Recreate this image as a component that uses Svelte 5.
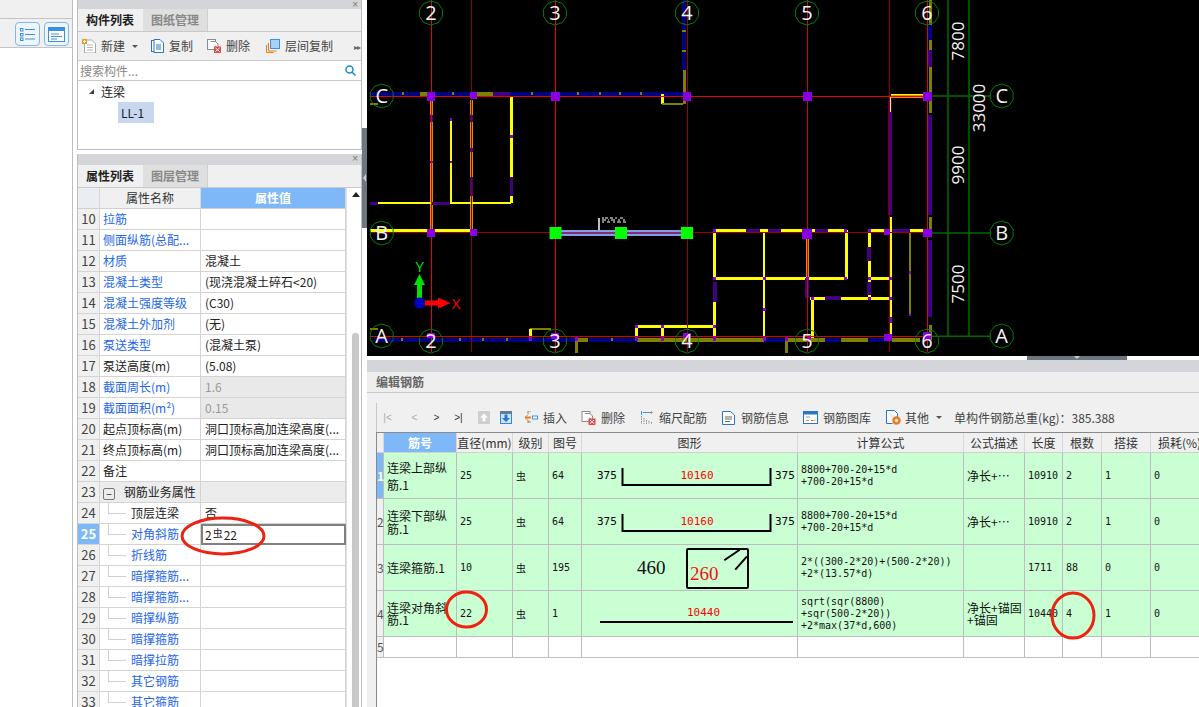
<script lang="ts">
  // Property grid rows: [no, name, value, blue?, flags]
  type Prop = { no: number; name: string; value?: string; blue?: boolean; ro?: boolean; child?: boolean; group?: boolean; sel?: boolean };
  const props: Prop[] = [
    { no: 10, name: '拉筋', blue: true },
    { no: 11, name: '侧面纵筋(总配...', blue: true },
    { no: 12, name: '材质', value: '混凝土', blue: true },
    { no: 13, name: '混凝土类型', value: '(现浇混凝土碎石<20)', blue: true },
    { no: 14, name: '混凝土强度等级', value: '(C30)', blue: true },
    { no: 15, name: '混凝土外加剂', value: '(无)', blue: true },
    { no: 16, name: '泵送类型', value: '(混凝土泵)', blue: true },
    { no: 17, name: '泵送高度(m)', value: '(5.08)' },
    { no: 18, name: '截面周长(m)', value: '1.6', blue: true, ro: true },
    { no: 19, name: '截面面积(m²)', value: '0.15', blue: true, ro: true },
    { no: 20, name: '起点顶标高(m)', value: '洞口顶标高加连梁高度(...' },
    { no: 21, name: '终点顶标高(m)', value: '洞口顶标高加连梁高度(...' },
    { no: 22, name: '备注' },
    { no: 23, name: '钢筋业务属性', group: true },
    { no: 24, name: '顶层连梁', value: '否', child: true },
    { no: 25, name: '对角斜筋', blue: true, child: true, sel: true },
    { no: 26, name: '折线筋', blue: true, child: true },
    { no: 27, name: '暗撑箍筋...', blue: true, child: true },
    { no: 28, name: '暗撑箍筋...', blue: true, child: true },
    { no: 29, name: '暗撑纵筋', blue: true, child: true },
    { no: 30, name: '暗撑箍筋', blue: true, child: true },
    { no: 31, name: '暗撑拉筋', blue: true, child: true },
    { no: 32, name: '其它钢筋', blue: true, child: true },
    { no: 33, name: '其它箍筋', blue: true, child: true }
  ];

  const Y = '#ffff00';
  const O = '#808000';
  const N = '#000080';
  const P = '#400080';
  const V = '#8000e0';
  const R = '#e08a10';

  // CAD members in page coordinates: x1, y1, x2, y2, colour, width
  const beams: [number, number, number, number, string, number][] = [
    // axis C
    [370, 93.5, 683, 93.5, N, 4], [420, 93.5, 431, 93.5, O, 4], [477, 93.5, 493, 93.5, O, 4], [493, 93.5, 510, 93.5, P, 4],
    [403, 92, 403, 95, O, 2], [453, 92, 453, 95, O, 2], [532, 92, 532, 95, O, 2], [578, 92, 578, 95, O, 2],
    [600, 92, 600, 95, O, 2], [620, 92, 620, 95, O, 2], [641, 92, 641, 95, O, 2],
    [662, 94, 662, 104, Y, 3], [662, 104, 683, 104, O, 2], [684, 70, 684, 104, O, 3], [684, 0, 684, 70, N, 4], [684, 30, 684, 32, O, 4], [684, 50, 684, 52, O, 4],
    [370, 104, 378, 104, O, 2],
    // verticals between C and B
    [431, 100, 431, 229, R, 3], [431, 115, 431, 122, P, 3], [431, 161, 431, 163, V, 3],
    [471.5, 100, 471.5, 229, R, 3], [471.5, 115, 471.5, 122, P, 3], [471.5, 148, 471.5, 152, P, 3], [471.5, 177, 471.5, 196, P, 3],
    [451, 118, 451, 203, Y, 1.5], [451, 118, 451, 121, V, 2], [451, 161, 451, 163, V, 2],
    [511, 96, 511, 203, Y, 3], [511, 135, 511, 138, V, 3], [511, 177, 511, 196, P, 3],
    [370, 203, 511, 203, Y, 2], [370, 203, 378, 203, P, 3], [432, 203, 450, 203, P, 3],
    // axis B, left
    [370, 230.5, 470, 230.5, Y, 3],
    // axis B, right block
    [714, 230.5, 846, 230.5, Y, 3], [746, 230.5, 760, 230.5, P, 4], [768, 230.5, 781, 230.5, P, 4], [815, 230.5, 828, 230.5, P, 4],
    [714.5, 230, 714.5, 279, Y, 3], [714.5, 282, 714.5, 302, P, 4], [714.5, 302, 714.5, 338, Y, 3],
    [714, 278.5, 846, 278.5, Y, 3], [846, 230, 846, 279, Y, 3],
    [764, 232, 764, 338, Y, 2.5], [764, 308, 764, 311, V, 3],
    [807, 237, 807, 278, R, 3], [807, 278, 807, 298, P, 4],
    [869, 230, 869, 298, Y, 3], [869, 247, 869, 261, P, 4], [869, 282, 869, 295, P, 4],
    [869, 230.5, 925, 230.5, Y, 3], [890, 230.5, 910, 230.5, P, 4],
    [869, 278.5, 890, 278.5, Y, 3],
    [810, 298, 890, 298, Y, 3], [825, 298, 841, 298, P, 4],
    [812.5, 298, 812.5, 339, Y, 3],
    [890, 217, 890, 337, Y, 3], [890, 100, 890, 215, P, 4], [890, 96, 890, 112, Y, 2], [890, 317, 890, 323, V, 3],
    [910, 233, 910, 314, O, 2], [910, 271, 910, 274, V, 2], [910, 314, 910, 316, V, 2],
    [891, 95.5, 923, 95.5, R, 4], [891, 94, 923, 94, Y, 1],
    // axis 6 wall
    [930, 0, 930, 113, O, 3], [930, 25, 930, 40, N, 4], [930, 50, 930, 67, P, 4], [930, 115, 930, 215, P, 4],
    [930, 217, 930, 230, O, 3], [930, 240, 930, 317, P, 4], [930, 325, 930, 340, O, 3],
    // small rooms on axis A
    [636, 326.5, 714, 326.5, Y, 2.5], [636, 327, 636, 339, Y, 3], [662, 327, 662, 339, Y, 3],
    [530, 329, 551, 329, O, 2], [530.5, 329, 530.5, 340, Y, 3], [370, 329, 378, 329, O, 2],
    // axis A
    [374, 339.5, 530, 339.5, N, 4], [530, 339.5, 575, 339.5, N, 4], [576, 339.5, 588, 339.5, O, 4], [589, 339.5, 635, 339.5, N, 4],
    [637, 339.5, 764, 339.5, O, 4], [765, 339.5, 784, 339.5, N, 4], [785, 339.5, 825, 339.5, O, 4], [825, 339.5, 841, 339.5, N, 4],
    [841, 339.5, 868, 339.5, O, 4], [868, 339.5, 885, 339.5, N, 4], [892, 339.5, 920, 339.5, O, 4],
    [402, 338, 402, 341, O, 2], [460, 338, 460, 341, O, 2], [483, 338, 483, 341, O, 2], [507, 338, 507, 341, O, 2], [612, 338, 612, 341, O, 2],
    [576, 340, 576, 353, O, 3], [786, 340, 786, 353, O, 3]
  ];

  // axis lines: bright red and dark red
  const axes: [number, number, number, number, string][] = [
    [431, 0, 431, 352, '#e60000'], [471, 0, 471, 352, '#8c0000'], [555, 0, 555, 352, '#e60000'], [687, 0, 687, 352, '#a00000'],
    [807, 0, 807, 352, '#d80000'], [889, 0, 889, 352, '#8c0000'], [927, 0, 927, 352, '#e60000'],
    [370, 96, 925, 96, '#e60000'], [477, 232.7, 925, 232.7, '#a00000'], [370, 232.7, 477, 232.7, '#a00000'], [370, 336.3, 925, 336.3, '#d80000']
  ];

  // violet column nodes: x, y, w, h
  const nodes: [number, number, number, number][] = [
    [427, 92, 8, 9], [470, 92, 7, 7], [551, 92, 9, 9], [683, 92, 8, 9], [803, 92, 9, 9], [923, 92, 9, 9],
    [427, 229, 8, 8], [470, 229, 7, 7], [802, 229, 10, 10], [884, 229, 6, 6], [923, 229, 9, 8],
    [713, 229, 3, 3], [844, 229, 3, 3], [868, 229, 3, 3], [713, 277, 3, 3], [844, 277, 3, 3], [763, 277, 3, 3], [806, 277, 3, 3], [868, 277, 3, 3], [889, 277, 3, 3],
    [811, 297, 3, 3], [868, 297, 3, 3], [889, 297, 3, 3], [713, 325, 3, 3], [635, 325, 3, 3], [661, 325, 3, 3],
    [884, 334, 8, 7], [923, 332, 8, 8], [427, 333, 8, 5], [551, 333, 8, 6], [683, 333, 8, 5],
    [635, 337, 3, 4], [661, 337, 3, 4], [713, 337, 3, 4], [763, 337, 3, 4], [575, 337, 3, 4], [785, 337, 3, 4], [529, 337, 3, 4], [807, 337, 4, 4]
  ];

  function ring(cx: number, cy: number, r = 12, n = 10): string {
    const pts: string[] = [];
    for (let i = 0; i < n; i++) {
      const a = (Math.PI * 2 * i) / n + Math.PI / n;
      pts.push(`${(cx + r * Math.cos(a)).toFixed(1)},${(cy + r * Math.sin(a)).toFixed(1)}`);
    }
    return pts.join(' ');
  }

  const bubbles: [number, number, string][] = [
    [431, 13, '2'], [555, 13, '3'], [687, 13, '4'], [807, 13, '5'], [927, 13, '6'],
    [431, 341, '2'], [555, 341, '3'], [687, 341, '4'], [807, 341, '5'], [927, 341, '6'],
    [381.7, 96, 'C'], [381.7, 233, 'B'], [381.7, 336, 'A'],
    [1001.7, 96, 'C'], [1001.7, 233, 'B'], [1001.7, 336, 'A']
  ];

  const dims: [number, number, string][] = [
    [958, 41, '7800'], [979, 108, '33000'], [958, 165, '9900'], [958, 284, '7500']
  ];

  const rebars = [
    { no: '1', name: '连梁上部纵筋.1', lh: 17, dia: '25', fig: '64', shape: 'u', lines: ['8800+700-20+15*d', '+700-20+15*d'], desc: '净长+⋯', len: '10910', count: '2', lap: '1', loss: '0' },
    { no: '2', name: '连梁下部纵筋.1', lh: 13, dia: '25', fig: '64', shape: 'u', lines: ['8800+700-20+15*d', '+700-20+15*d'], desc: '净长+⋯', len: '10910', count: '2', lap: '1', loss: '0' },
    { no: '3', name: '连梁箍筋.1', lh: 14, dia: '10', fig: '195', shape: 'box', lines: ['2*((300-2*20)+(500-2*20))', '+2*(13.57*d)'], desc: '', len: '1711', count: '88', lap: '0', loss: '0' },
    { no: '4', name: '连梁对角斜筋.1', lh: 12, dia: '22', fig: '1', shape: 'bar', lines: ['sqrt(sqr(8800)', '+sqr(500-2*20))', '+2*max(37*d,600)'], desc: '净长+锚固+锚固', len: '10440', count: '4', lap: '1', loss: '0' }
  ];
</script>

<div class="app">
  <aside class="side">
    <div class="side-top"></div>
    <div class="side-tools">
      <span class="side-btn">
        <svg width="17" height="15" viewBox="0 0 17 15"><g fill="none" stroke="#3d8fe0"><rect x="1.5" y="1.5" width="2.5" height="2.5"/><rect x="1.5" y="6.5" width="2.5" height="2.5"/><rect x="1.5" y="11" width="2.5" height="2.5"/><path d="M6 2.5h10M6 7.5h10M6 12h10"/></g></svg>
      </span>
      <span class="side-btn">
        <svg width="17" height="15" viewBox="0 0 17 15"><rect x=".5" y=".5" width="16" height="14" fill="#fff" stroke="#3d8fe0"/><rect x=".5" y=".5" width="16" height="3.5" fill="#3d8fe0"/><path d="M3 7h8M3 9.5h11M3 12h6" stroke="#3d8fe0"/></svg>
      </span>
    </div>
  </aside>

  <section class="panels">
    <div class="panel list-panel">
      <div class="titlebar top"><span class="close">×</span></div>
      <div class="tabs">
        <span class="tab active">构件列表</span><span class="tab">图纸管理</span>
      </div>
      <div class="tools">
        <svg class="ico first" width="14" height="14" viewBox="0 0 14 14"><path d="M2.5 1h7l4 3.5V14h-11z" fill="#fff" stroke="#a8a8a8"/><path d="M5 6h6M5 8.500h6M5 11h6" stroke="#b5b5b5"/><rect x="0" y="0" width="5" height="5" fill="#f39a1e"/><path d="M1 2.500h3M2.500 1v3" stroke="#fff"/></svg>
        <span class="tool-text">新建</span><span class="caret"></span>
        <svg class="ico gap-copy" width="13" height="14" viewBox="0 0 13 14"><rect x=".5" y="1.500" width="8" height="11" fill="#fff" stroke="#2a76c6"/><path d="M3 .5h6l3.500 3.500V13.500H3z" fill="#fff" stroke="#2a76c6"/><path d="M5 6h5M5 8h5M5 10h5" stroke="#2a76c6"/></svg>
        <span class="tool-text">复制</span>
        <svg class="ico gap-del" width="14" height="14" viewBox="0 0 14 14"><rect x=".5" y=".5" width="8" height="10" fill="#fff" stroke="#8c8c8c"/><path d="M3.500 2.500h5l2.500 2.500v4" fill="#fff" stroke="#8c8c8c"/><rect x="7" y="7.500" width="7" height="6.500" fill="#e04a4a"/><path d="M8.500 9l4 3.500M12.500 9l-4 3.500" stroke="#fff"/></svg>
        <span class="tool-text">删除</span>
        <svg class="ico gap-layer" width="14" height="14" viewBox="0 0 14 14"><rect x="4.500" y=".5" width="9" height="9" fill="#a9d1f7" stroke="#3d8fe0"/><path d="M2.500 4v8h8M.5 6v7.500h7" fill="none" stroke="#ee7a1b"/></svg>
        <span class="tool-text">层间复制</span>
        <span class="more">▸▸</span>
      </div>
      <div class="search">
        <span class="placeholder">搜索构件...</span>
        <svg width="11" height="11" viewBox="0 0 11 11"><circle cx="4.500" cy="4.500" r="3.500" fill="none" stroke="#1a8ed0" stroke-width="1.500"/><path d="M7 7l3.500 3.500" stroke="#1a8ed0" stroke-width="1.500"/></svg>
      </div>
      <div class="tree">
        <div class="tree-root"><span class="tri"></span>连梁</div>
        <div class="tree-leaf">LL-1</div>
      </div>
    </div>

    <div class="panel prop-panel">
      <div class="titlebar"><span class="close">×</span></div>
      <div class="tabs">
        <span class="tab active">属性列表</span><span class="tab">图层管理</span>
      </div>
      <div class="prop-body">
        <table class="prop">
          <colgroup><col class="p-no" /><col class="p-name" /><col class="p-val" /></colgroup>
          <thead>
            <tr><th></th><th>属性名称</th><th class="on">属性值</th></tr>
          </thead>
          <tbody>
            {#each props as p}
              <tr class:group={p.group}>
                <td class="no" class:sel={p.sel}>{p.no}</td>
                <td class="name" class:blue={p.blue} class:child={p.child}>
                  {#if p.child}<span class="branch"></span>{/if}
                  {#if p.group}<span class="minus">−</span>{/if}
                  {p.name}
                </td>
                <td class="val" class:ro={p.ro} class:editing={p.sel}>
                  {#if p.sel}2<span class="grade">虫</span>22{:else}{p.value ?? ''}{/if}
                </td>
              </tr>
            {/each}
          </tbody>
        </table>
        <div class="vscroll">
          <span class="up"></span>
          <span class="thumb"></span>
        </div>
      </div>
    </div>
  </section>

  <div class="splitter"><span class="split-handle"></span></div>

  <main class="main">
    <svg class="cad" width="832" height="356" viewBox="367 0 832 356">
      <rect x="367" y="0" width="832" height="356" fill="#000" />
      <g stroke="#006a00" stroke-width="1.500">
        <line x1="948" y1="0" x2="948" y2="337" />
        <line x1="969" y1="0" x2="969" y2="337" />
        <line x1="927" y1="96" x2="990" y2="96" />
        <line x1="927" y1="233" x2="990" y2="233" />
        <line x1="927" y1="336.300" x2="990" y2="336.300" />
      </g>
      {#each beams as b}
        <line x1={b[0]} y1={b[1]} x2={b[2]} y2={b[3]} stroke={b[4]} stroke-width={b[5]} shape-rendering="crispEdges" />
      {/each}
      {#each axes as a}
        <line x1={a[0]} y1={a[1]} x2={a[2]} y2={a[3]} stroke={a[4]} stroke-width="1" shape-rendering="crispEdges" />
      {/each}
      {#each nodes as n}
        <rect x={n[0]} y={n[1]} width={n[2]} height={n[3]} fill="#8a00e6" />
      {/each}

      <!-- selected beam -->
      <line x1="555" y1="231" x2="687" y2="231" stroke="#7f9fe6" stroke-width="2" />
      <line x1="555" y1="235" x2="687" y2="235" stroke="#7f9fe6" stroke-width="2" />
      <line x1="555" y1="233" x2="687" y2="233" stroke="#8a2a70" stroke-width="2" />
      <rect x="549.500" y="227" width="12" height="12" fill="#00ff00" />
      <rect x="615" y="227" width="12" height="12" fill="#00ff00" />
      <rect x="681" y="227" width="12" height="12" fill="#00ff00" />
      <line x1="599" y1="218" x2="599" y2="230" stroke="#fff" stroke-width="1.500" />
      <path d="M602 218h2m1 0h3m2 0h3m2 0h2m3 0h3M602 220h4m2 0h1m2 0h4m3 0h2m3 0h2M602 222h2m3 0h3m3 0h2m2 0h4m2 0h3" stroke="#fff" stroke-width="1" fill="none" />

      <!-- axis gizmo -->
      <rect x="417" y="280" width="5" height="22" fill="#00e000" />
      <polygon points="419.500,274 425,285 414,285" fill="#00e000" />
      <rect x="424" y="300.500" width="17" height="5" fill="#ff0000" />
      <polygon points="450.500,303 438,297.500 438,308.500" fill="#ff0000" />
      <circle cx="419.700" cy="303" r="5.500" fill="#0000c0" />
      <text class="gizmo gy" x="419.700" y="272">Y</text>
      <text class="gizmo gx" x="456" y="309">X</text>

      {#each bubbles as b}
        <polygon points={ring(b[0], b[1])} fill="none" stroke="#008000" stroke-width="1" />
        <text class="bubble" x={b[0]} y={b[1] + 7}>{b[2]}</text>
      {/each}
      {#each dims as d}
        <text class="dim" transform="translate({d[0] + 6} {d[1]}) rotate(-90)">{d[2]}</text>
      {/each}
    </svg>

    <div class="drag-strip"><span class="drag-handle"></span></div>
    <div class="editor-gap"></div>
    <div class="editor-title">编辑钢筋</div>

    <div class="editor">
      <div class="rb-tools">
        <span class="nav dim-nav first-nav">|&lt;</span>
        <span class="nav dim-nav">&lt;</span>
        <span class="nav">&gt;</span>
        <span class="nav">&gt;|</span>
        <svg class="rb-ico up-ico" width="12" height="13" viewBox="0 0 12 13"><rect width="12" height="13" fill="#cfcfcf"/><path d="M6 2.500l4 4H7.500v4h-3v-4H2z" fill="#fff"/></svg>
        <svg class="rb-ico down-ico" width="12" height="13" viewBox="0 0 12 13"><rect width="12" height="13" fill="#3a86d6"/><rect width="12" height="2" fill="#777"/><rect x="1" y="3" width="10" height="9" fill="#cfe3f7"/><path d="M6 11l4-4H7.500V3.500h-3V7H2z" fill="#2a76c6"/></svg>
        <svg class="rb-ico ins-ico" width="13" height="13" viewBox="0 0 13 13"><path d="M3 0h3M3 11h3M3 0v3M3 9v3" stroke="#888" fill="none"/><path d="M0 6.500h6" stroke="#ee7a1b" stroke-width="2"/><path d="M3 3.500L0 6.500l3 3" stroke="#ee7a1b" fill="none"/><rect x="7.500" y="5" width="5" height="3" fill="#fff" stroke="#3d8fe0"/></svg>
        <span class="rb-text">插入</span>
        <svg class="rb-ico del-ico" width="15" height="14" viewBox="0 0 14 14"><rect x=".5" y=".5" width="8" height="10" fill="#fff" stroke="#8c8c8c"/><path d="M3.500 2.500h5l2.500 2.500v4" fill="#fff" stroke="#8c8c8c"/><rect x="7" y="7.500" width="7" height="6.500" fill="#e04a4a"/><path d="M8.500 9l4 3.500M12.500 9l-4 3.500" stroke="#fff"/></svg>
        <span class="rb-text">删除</span>
        <svg class="rb-ico scale-ico" width="12" height="13" viewBox="0 0 12 13"><path d="M.5 0v4M2 1.500h8" stroke="#3d8fe0"/><path d="M10 0l2 1.500-2 1.500" fill="#ee7a1b"/><path d="M.5 5v8M3 7v6M5.500 9v4M8 10v3M10.500 11v2" stroke="#888" stroke-dasharray="1.500 1"/></svg>
        <span class="rb-text">缩尺配筋</span>
        <svg class="rb-ico info-ico" width="13" height="14" viewBox="0 0 13 14"><path d="M.5.5h8l4 3.500v9.500H.5z" fill="#fff" stroke="#2a76c6"/><path d="M3 6h7M3 8h7M3 10.500h5" stroke="#6b6b6b"/></svg>
        <span class="rb-text">钢筋信息</span>
        <svg class="rb-ico lib-ico" width="15" height="13" viewBox="0 0 15 13"><rect x=".5" y=".5" width="14" height="12" fill="#fff" stroke="#2a76c6"/><rect x="1" y="1" width="13" height="2.500" fill="#2a76c6"/><path d="M3 6h4M3 9.500h3" stroke="#999"/><path d="M8 9.500h2" stroke="#e04a4a"/><path d="M10.500 9.500h2" stroke="#ee9a1b"/></svg>
        <span class="rb-text">钢筋图库</span>
        <svg class="rb-ico other-ico" width="15" height="15" viewBox="0 0 15 15"><path d="M.5.5h8l3 3v3.500M.5.500v13h6" fill="#fff" stroke="#2a76c6"/><circle cx="10.500" cy="10.500" r="3" fill="none" stroke="#ee7a1b" stroke-width="2.500"/></svg>
        <span class="rb-text">其他</span>
        <span class="caret rb-caret"></span>
        <span class="rb-text total">单构件钢筋总重(kg)：385.388</span>
      </div>

      <div class="rb-wrap">
        <table class="rb">
          <colgroup>
            <col class="c-no" /><col class="c-name" /><col class="c-dia" /><col class="c-grade" /><col class="c-fig" />
            <col class="c-shape" /><col class="c-calc" /><col class="c-desc" /><col class="c-len" /><col class="c-count" /><col class="c-lap" /><col class="c-loss" />
          </colgroup>
          <thead>
            <tr>
              <th></th><th class="on">筋号</th><th>直径(mm)</th><th>级别</th><th>图号</th><th>图形</th><th>计算公式</th><th>公式描述</th><th>长度</th><th>根数</th><th>搭接</th><th class="clip">损耗(%)</th>
            </tr>
          </thead>
          <tbody>
            {#each rebars as r, i}
              <tr class="bar-row">
                <td class="rno" class:cur={i === 0}>{r.no}</td>
                <td class="rname" style="line-height:{r.lh}px">{r.name}</td>
                <td>{r.dia}</td>
                <td class="rgrade">虫</td>
                <td>{r.fig}</td>
                <td class="rshape">
                  {#if r.shape === 'u'}
                    <svg width="216" height="45" viewBox="0 0 216 45">
                      <text class="s-black" x="15" y="26">375</text>
                      <path d="M40.500 15v17h148V15" fill="none" stroke="#000" stroke-width="2" />
                      <text class="s-red" x="115" y="26" text-anchor="middle">10160</text>
                      <text class="s-black" x="193" y="26">375</text>
                    </svg>
                  {:else if r.shape === 'box'}
                    <svg width="216" height="45" viewBox="0 0 216 45">
                      <text class="s-big" x="55" y="29">460</text>
                      <rect x="105" y="4" width="61" height="39" rx="1" fill="none" stroke="#000" stroke-width="2" />
                      <text class="s-big red" x="108" y="35">260</text>
                      <path d="M142.300 15.300L157.700 4.700M153.300 24.700L165 11.300" stroke="#000" stroke-width="2" />
                    </svg>
                  {:else}
                    <svg width="216" height="45" viewBox="0 0 216 45">
                      <text class="s-red" x="121.500" y="25" text-anchor="middle">10440</text>
                      <line x1="18" y1="31" x2="211" y2="31" stroke="#000" stroke-width="2" />
                    </svg>
                  {/if}
                </td>
                <td class="rcalc">{#each r.lines as l}<div>{l}</div>{/each}</td>
                <td class="rdesc">{r.desc}</td>
                <td>{r.len}</td>
                <td>{r.count}</td>
                <td>{r.lap}</td>
                <td>{r.loss}</td>
              </tr>
            {/each}
            <tr class="empty-row">
              <td class="rno">5</td><td></td><td></td><td></td><td></td><td></td><td></td><td></td><td></td><td></td><td></td><td></td>
            </tr>
          </tbody>
        </table>
      </div>
    </div>
  </main>

  <!-- hand-drawn marks on top of the screenshot -->
  <svg class="marks" width="1199" height="707" viewBox="0 0 1199 707">
    <ellipse cx="223" cy="536" rx="41" ry="18" />
    <ellipse cx="466.500" cy="609.500" rx="20" ry="17.500" />
    <ellipse cx="1073" cy="615.500" rx="21" ry="22.500" />
  </svg>
</div>

<style>
  :global(body) {
    margin: 0;
    background: #fff;
  }

  .app {
    position: relative;
    display: flex;
    width: 1199px;
    height: 707px;
    overflow: hidden;
    background: #fff;
    color: #222;
    font-family: "Noto Sans CJK SC", "Liberation Sans", sans-serif;
    font-size: 12px;
  }

  /* left strip */
  .side {
    flex: 0 0 73px;
    box-sizing: border-box;
    margin-right: 4px;
    border-right: 1px solid #bdbdbd;
  }
  .side-top {
    height: 18px;
    background: #f0f0f0;
    border-bottom: 1px solid #c4c4c4;
  }
  .side-tools {
    display: flex;
    gap: 4px;
    box-sizing: border-box;
    height: 29px;
    padding: 3px 0 0 15px;
    background: #f0f0f0;
    border-bottom: 1px solid #c4c4c4;
  }
  .side-btn {
    display: flex;
    align-items: center;
    justify-content: center;
    box-sizing: border-box;
    width: 25px;
    height: 24px;
    border: 1px solid #7fb8f0;
    border-radius: 4px;
    background: #eef5fc;
  }

  /* component and property panels */
  .panels {
    display: flex;
    flex-direction: column;
    flex: 0 0 285px;
    height: 707px;
    gap: 4px;
  }
  .panel {
    box-sizing: border-box;
    border-left: 1px solid #bdbdbd;
    border-right: 1px solid #bdbdbd;
    overflow: hidden;
  }
  .list-panel {
    flex: none;
    height: 150px;
    border-bottom: 1px solid #bdbdbd;
  }
  .prop-panel {
    flex: 1;
    min-height: 0;
  }
  .titlebar {
    position: relative;
    height: 11px;
    background: #d3d5d9;
  }
  .titlebar.top {
    height: 9px;
  }
  .close {
    position: absolute;
    top: 0;
    right: 3px;
    color: #777;
    font-family: "Liberation Sans", sans-serif;
    font-size: 10px;
    line-height: 9px;
  }
  .tabs {
    display: flex;
    height: 22px;
    background: #f0f0f0;
    border-bottom: 1px solid #c8c8c8;
    box-sizing: content-box;
  }
  .tab {
    box-sizing: border-box;
    width: 65px;
    padding-left: 8px;
    color: #888;
    background: #dfdfdf;
    border-right: 1px solid #cfcfcf;
    font-size: 12px;
    line-height: 22px;
    font-weight: 700;
  }
  .tab.active {
    color: #222;
    background: #f0f0f0;
    border-right: 0;
  }
  .tools {
    display: flex;
    align-items: center;
    box-sizing: border-box;
    height: 29px;
    background: #f0f0f0;
    border-bottom: 1px solid #c8c8c8;
    color: #444;
    white-space: nowrap;
  }
  .ico {
    flex: none;
    margin-right: 5px;
  }
  .first { margin-left: 4px; }
  .gap-copy { margin-left: 13px; }
  .gap-del { margin-left: 14px; }
  .gap-layer { margin-left: 16px; }
  .caret {
    display: inline-block;
    margin-left: 7px;
    border-top: 3px solid #555;
    border-left: 3px solid transparent;
    border-right: 3px solid transparent;
  }
  .more {
    margin-left: 21px;
    color: #666;
    font-size: 8px;
    letter-spacing: -1px;
  }
  .search {
    display: flex;
    align-items: center;
    justify-content: space-between;
    box-sizing: border-box;
    height: 20px;
    padding: 0 5px 0 2px;
    border-bottom: 1px solid #c8c8c8;
  }
  .placeholder {
    color: #888;
    line-height: 18px;
  }
  .tree-root {
    display: flex;
    align-items: center;
    height: 21px;
    padding-left: 23px;
    position: relative;
    line-height: 21px;
  }
  .tri {
    position: absolute;
    left: 11px;
    top: 8px;
    border-bottom: 5px solid #444;
    border-left: 5px solid transparent;
  }
  .tree-leaf {
    width: 36px;
    height: 21px;
    margin-left: 40px;
    padding-left: 3px;
    box-sizing: border-box;
    background: #c7d7ef;
    line-height: 21px;
  }

  .prop-body {
    display: flex;
  }
  .prop {
    flex: none;
    width: 268px;
    table-layout: fixed;
    border-collapse: separate;
    border-spacing: 0;
  }
  .p-no { width: 22px; }
  .p-name { width: 101px; }
  .p-val { width: 145px; }
  .prop th {
    height: 21px;
    padding: 0;
    box-sizing: border-box;
    background: #f0f0f0;
    border-right: 1px solid #d8d8d8;
    border-bottom: 1px solid #d0d0d0;
    color: #333;
    font-size: 12px;
    line-height: 18px;
    font-weight: 400;
  }
  .prop th:first-child {
    background: #eaeef3;
  }
  .prop th.on,
  .rb th.on {
    background: #7fb8f8;
    color: #fff;
    font-weight: 700;
  }
  .prop td {
    box-sizing: border-box;
    height: 21px;
    padding: 0 0 0 4px;
    border-right: 1px solid #d4d4d4;
    border-bottom: 1px solid #d4d4d4;
    line-height: 16px;
    white-space: nowrap;
    overflow: hidden;
  }
  .prop td.no {
    padding: 0;
    text-align: center;
    background: #f0f0f0;
    color: #444;
    font-size: 13px;
  }
  .prop td.no.sel {
    background: #7fb8f8;
    color: #fff;
    font-weight: 700;
  }
  .prop td.name {
    position: relative;
    padding-left: 3px;
  }
  .prop td.name.child {
    padding-left: 31px;
  }
  .blue {
    color: #2566e8;
  }
  .branch {
    position: absolute;
    left: 8px;
    top: 0;
    width: 17px;
    height: 10px;
    border-left: 1px solid #d0d0d0;
    border-bottom: 1px solid #d0d0d0;
  }
  .minus {
    display: inline-block;
    box-sizing: border-box;
    width: 12px;
    height: 12px;
    margin-right: 6px;
    border: 1px solid #777;
    border-radius: 2px;
    text-align: center;
    line-height: 9px;
    font-size: 10px;
    vertical-align: -1px;
  }
  .group td {
    background: #ececec;
  }
  .prop td.ro {
    background: #e9e9e9;
    color: #999;
  }
  .prop td.editing {
    border: 2px solid #808080;
    padding-left: 2px;
    line-height: 15px;
  }
  .grade {
    font-size: 10px;
    line-height: 0;
    vertical-align: 3px;
    margin: 0 1px;
  }
  .vscroll {
    position: relative;
    flex: 1;
    height: 519px;
    border-left: 1px solid #e0e0e0;
  }
  .up {
    position: absolute;
    top: 4px;
    left: 5px;
    border-bottom: 5px solid #222;
    border-left: 4px solid transparent;
    border-right: 4px solid transparent;
  }
  .thumb {
    position: absolute;
    top: 145px;
    left: 5px;
    width: 7px;
    height: 400px;
    border-radius: 3px 3px 0 0;
    background: #c8c8c8;
  }

  .splitter {
    position: relative;
    flex: 0 0 5px;
  }
  .split-handle {
    position: absolute;
    top: 128px;
    left: 0;
    width: 5px;
    height: 100px;
    background: #6e7680;
  }
  .split-handle::after {
    content: "";
    position: absolute;
    top: 46px;
    left: 1px;
    border-right: 3px solid #ccc;
    border-top: 4px solid transparent;
    border-bottom: 4px solid transparent;
  }

  /* drawing and rebar editor */
  .main {
    display: flex;
    flex-direction: column;
    flex: 0 0 832px;
    height: 707px;
  }
  .cad {
    display: block;
    flex: none;
  }
  .bubble,
  .dim,
  .gizmo {
    font-family: "Open Sans", "Liberation Sans", sans-serif;
    fill: #f4f4f4;
    text-anchor: middle;
  }
  .bubble { font-size: 20px; }
  .dim { font-size: 17px; }
  .gizmo { font-size: 15px; }
  .gy { fill: #00e000; }
  .gx { fill: #ff0000; }
  .drag-strip {
    flex: none;
    height: 4px;
    background: #fff;
  }
  .drag-handle {
    display: block;
    position: relative;
    width: 100px;
    height: 4px;
    margin-left: 660px;
    background: #6e7680;
  }
  .drag-handle::after {
    content: "";
    position: absolute;
    left: 47px;
    top: 0;
    border-top: 3px solid #ccc;
    border-left: 3px solid transparent;
    border-right: 3px solid transparent;
  }
  .editor-gap {
    flex: none;
    height: 12px;
    background: #d3d5d9;
  }
  .editor-title {
    flex: none;
    box-sizing: border-box;
    height: 21px;
    padding-left: 9px;
    background: #eee;
    border-bottom: 1px solid #c8c8c8;
    color: #666;
    line-height: 20px;
    font-weight: 700;
  }
  .editor {
    flex: 1;
    display: flex;
    flex-direction: column;
    min-height: 0;
    padding-left: 9px;
    background: #f0f0f0;
  }
  .rb-tools {
    display: flex;
    align-items: center;
    flex: none;
    height: 29px;
    margin-top: 10px;
    box-sizing: border-box;
    color: #444;
    white-space: nowrap;
    border-left: 1px solid #c8c8c8;
  }
  .nav {
    width: 11px;
    color: #333;
    font-family: "Liberation Sans", sans-serif;
    font-size: 10px;
    text-align: center;
    margin-right: 11px;
  }
  .first-nav { margin-left: 5px; margin-right: 16px; }
  .dim-nav { color: #aaa; }
  .rb-ico { flex: none; }
  .up-ico { margin-left: 3px; }
  .down-ico { margin-left: 10px; }
  .ins-ico { margin-left: 13px; margin-right: 5px; }
  .del-ico { margin-left: 14px; margin-right: 5px; }
  .scale-ico { margin-left: 16px; margin-right: 6px; }
  .info-ico { margin-left: 15px; margin-right: 6px; }
  .lib-ico { margin-left: 14px; margin-right: 5px; }
  .other-ico { margin-left: 15px; margin-right: 4px; }
  .rb-text { font-size: 12px; line-height: 16px; }
  .rb-caret { margin-left: 7px; margin-right: 0; }
  .total { margin-left: 12px; }
  .tool-text { line-height: 16px; }

  .rb-wrap {
    flex: 1;
    min-height: 0;
    overflow: hidden;
    background: #fff;
    border-left: 1px solid #8a8a8a;
    border-top: 1px solid #8a8a8a;
  }
  .rb {
    width: 832px;
    table-layout: fixed;
    border-collapse: separate;
    border-spacing: 0;
  }
  .c-no { width: 7px; }
  .c-name { width: 73px; }
  .c-dia { width: 56px; }
  .c-grade { width: 36px; }
  .c-fig { width: 33px; }
  .c-shape { width: 216px; }
  .c-calc { width: 166px; }
  .c-desc { width: 61px; }
  .c-len { width: 38px; }
  .c-count { width: 39px; }
  .c-lap { width: 49px; }
  .c-loss { width: 58px; }
  .rb th {
    box-sizing: border-box;
    height: 20px;
    padding: 0;
    background: #f0f0f0;
    border-right: 1px solid #d8d8d8;
    border-bottom: 1px solid #d0d0d0;
    color: #333;
    font-size: 12px;
    line-height: 16px;
    font-weight: 400;
    white-space: nowrap;
    overflow: hidden;
  }
  .rb td {
    box-sizing: border-box;
    height: 46px;
    padding: 0 0 0 3px;
    border-right: 1px solid #bdbdbd;
    border-bottom: 1px solid #bdbdbd;
    font-family: "DejaVu Sans Mono", "Noto Sans CJK SC", monospace;
    font-size: 10px;
    line-height: 12px;
    color: #111;
    overflow: hidden;
  }
  .bar-row td {
    background: #caffd4;
  }
  .rb td.rno {
    padding: 0;
    background: #f0f0f0;
    color: #555;
    font-family: "Noto Sans CJK SC", sans-serif;
    font-size: 12px;
    overflow: visible;
  }
  .rb td.rno.cur {
    background: #7fb8f8;
    color: #fff;
    font-weight: 700;
  }
  .rb td.rname,
  .rb td.rdesc {
    font-family: "Noto Sans CJK SC", "DejaVu Sans Mono", sans-serif;
    font-size: 12px;
  }
  .rb td.rgrade {
    font-family: "Noto Sans CJK SC", sans-serif;
    font-size: 10px;
  }
  .rb td.rshape {
    padding: 0;
  }
  .rshape svg {
    display: block;
  }
  .s-black,
  .s-red {
    font-family: "DejaVu Sans Mono", monospace;
    font-size: 11px;
  }
  .s-red { fill: #ff0000; }
  .s-big {
    font-family: "Liberation Serif", serif;
    font-size: 19px;
    fill: #111;
  }
  .s-big.red { fill: #ee1111; }
  .empty-row td {
    height: 21px;
    background: #fff;
  }

  .marks {
    position: absolute;
    top: 0;
    left: 0;
    pointer-events: none;
  }
  .marks ellipse {
    fill: none;
    stroke: #ee2211;
    stroke-width: 3;
  }
</style>
